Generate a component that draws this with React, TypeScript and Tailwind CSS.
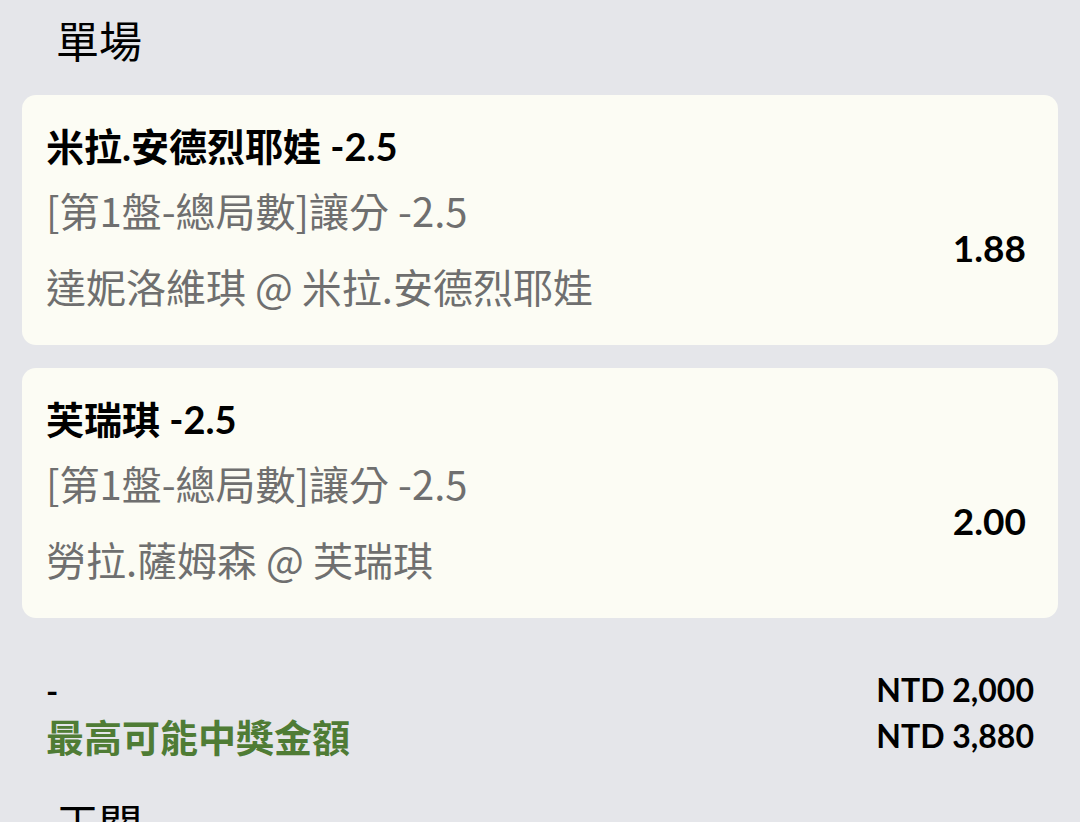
const latin = "font-['Lato','Noto_Sans_CJK_TC',sans-serif]";
const cjk = "font-['Noto_Sans_CJK_TC',sans-serif]";

type Bet = { pick: string; market: string; match: string; odds: string };

const bets: Bet[] = [
  {
    pick: "米拉.安德烈耶娃 -2.5",
    market: "[第1盤-總局數]讓分 -2.5",
    match: "達妮洛維琪 @ 米拉.安德烈耶娃",
    odds: "1.88",
  },
  {
    pick: "芙瑞琪 -2.5",
    market: "[第1盤-總局數]讓分 -2.5",
    match: "勞拉.薩姆森 @ 芙瑞琪",
    odds: "2.00",
  },
];

function BetCard({ bet }: { bet: Bet }) {
  return (
    <div className="rounded-[14px] bg-[#fcfcf4] pl-6 pr-8 pt-[25px] pb-[21px]">
      <div className={`${latin} text-[38px] font-bold leading-[52px] text-black`}>{bet.pick}</div>
      <div className="flex items-center">
        <div className="flex-1">
          <div className={`${cjk} text-[40px] leading-[76px] text-[#6f6f6f]`}>{bet.market}</div>
          <div className={`${cjk} text-[40px] leading-[76px] text-[#6f6f6f]`}>{bet.match}</div>
        </div>
        <div className={`${latin} text-[37px] font-bold text-black`}>{bet.odds}</div>
      </div>
    </div>
  );
}

export default function App() {
  return (
    <div className="h-[822px] w-[1080px] overflow-hidden bg-[#e5e6ea]">
      <h2 className={`${cjk} pl-[56px] pt-[10px] text-[43px] leading-[58px] text-black`}>單場</h2>

      <div className="mt-[27px] flex flex-col gap-[23px] px-[22px]">
        {bets.map((b) => (
          <BetCard key={b.pick} bet={b} />
        ))}
      </div>

      <div className="mt-[49px] flex justify-between pl-[46px] pr-[46px]">
        <div className="flex flex-col">
          <span className={`${latin} text-[33px] font-bold leading-[46px] text-black`}>-</span>
          <span className={`${cjk} text-[38px] font-bold leading-[46px] text-[#4f7c35]`}>最高可能中獎金額</span>
        </div>
        <div className="flex flex-col items-end">
          <span className={`${latin} text-[32px] font-bold leading-[46px] text-black`}>NTD 2,000</span>
          <span className={`${latin} text-[32px] font-bold leading-[46px] text-black`}>NTD 3,880</span>
        </div>
      </div>

      <h2 className={`${cjk} mt-[34px] pl-[56px] text-[43px] leading-[58px] text-black`}>王關</h2>
    </div>
  );
}
